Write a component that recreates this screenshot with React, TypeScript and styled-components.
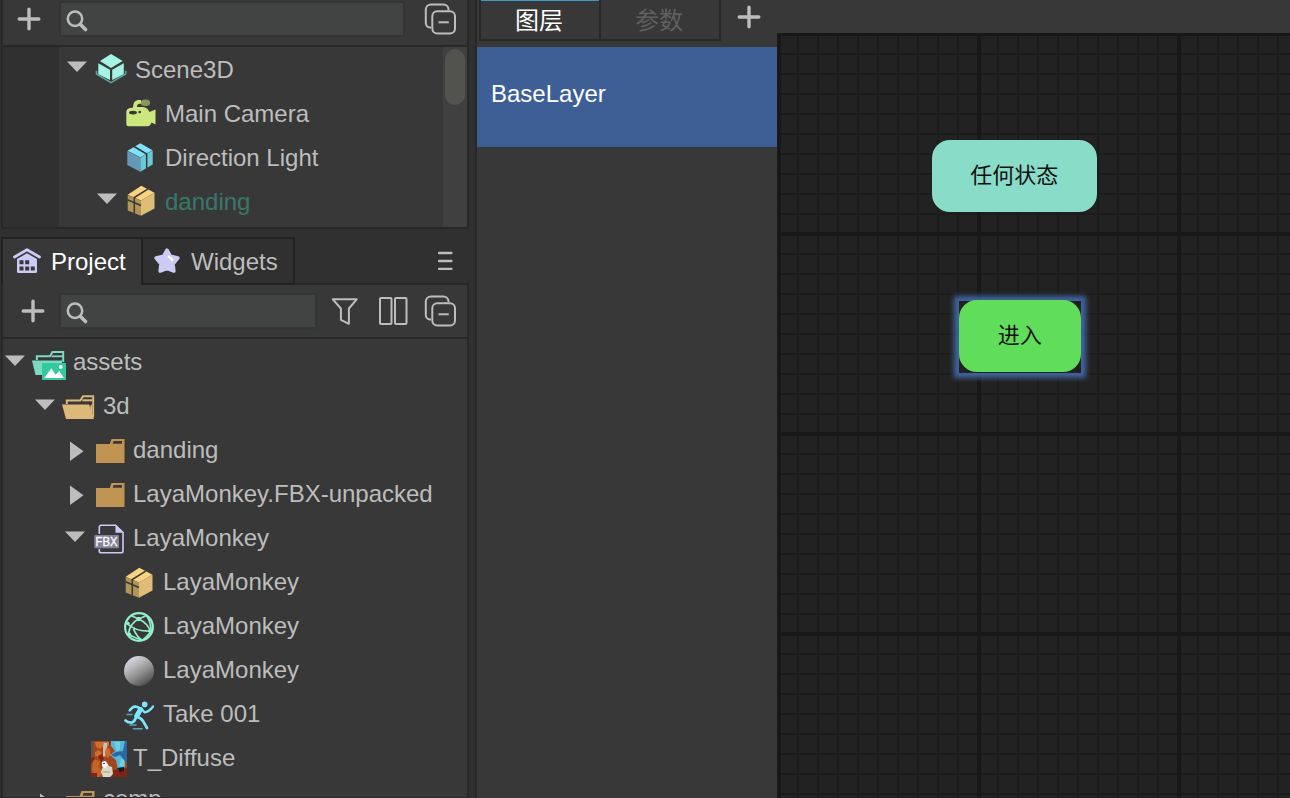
import React from "react";
import styled, { createGlobalStyle } from "styled-components";

const GlobalStyle = createGlobalStyle`
  * { box-sizing: border-box; }
  html, body { margin: 0; padding: 0; background: #303030; overflow: hidden; }
  body {
    font-family: "Liberation Sans", "Noto Sans CJK SC", sans-serif;
    font-size: 24px;
    color: #bdbdbd;
  }
  svg { display: block; flex: none; }
`;

const LINE = "#282828";
const PANEL = "#383838";
const ICON = "#bdbdbd";

const Shell = styled.div`
  display: grid;
  grid-template-columns: 475px 302px 513px;
  width: 1290px;
  height: 798px;
  overflow: hidden;
`;

const Sidebar = styled.aside`
  display: flex;
  flex-direction: column;
  gap: 8px;
  height: 798px;
  padding: 0 6px 0 1px;
  overflow: hidden;
`;

const HierarchyPanel = styled.section`
  display: flex;
  flex-direction: column;
  height: 229px;
  border: solid ${LINE};
  border-width: 0 2px 2px;
  background: ${PANEL};
`;

const ProjectPanel = styled.section`
  display: flex;
  flex-direction: column;
  height: 561px;
`;

const ProjectBody = styled.div`
  display: flex;
  flex-direction: column;
  flex: 1;
  min-height: 0;
  border: solid ${LINE};
  border-width: 0 2px 1px;
  background: ${PANEL};
`;

const Toolbar = styled.div<{ $height: number; $left: number; $top: number }>`
  display: flex;
  align-items: flex-start;
  height: ${(p) => p.$height}px;
  padding: ${(p) => p.$top}px 0 0 ${(p) => p.$left}px;
  border-bottom: 2px solid ${LINE};
  flex: none;
`;

const SearchBox = styled.div<{ $width: number; $left: number }>`
  width: ${(p) => p.$width}px;
  height: 36px;
  margin-left: ${(p) => p.$left}px;
  border: 2px solid #343535;
  background: #414443;
  flex: none;
`;

const ToolButton = styled.span<{ $left?: number; $top?: number }>`
  display: flex;
  margin-left: ${(p) => p.$left ?? 0}px;
  margin-top: ${(p) => p.$top ?? 0}px;
`;

const HierarchyBody = styled.div`
  display: grid;
  grid-template-columns: 56px 384px 24px;
  flex: 1;
  min-height: 0;
`;

const Gutter = styled.div`
  background: #303030;
`;

const ScrollTrack = styled.div`
  padding: 2px;
  background: #404040;
`;

const ScrollThumb = styled.div`
  width: 20px;
  height: 56px;
  border-radius: 10px;
  background: #52524f;
`;

const Tree = styled.div`
  flex: 1;
  min-height: 0;
  overflow: hidden;
`;

const TreeRow = styled.div<{ $indent: number }>`
  display: flex;
  height: 44px;
  padding-left: ${(p) => p.$indent}px;
`;

const GlyphSlot = styled.span<{ $lift: boolean }>`
  display: flex;
  height: 44px;
  margin-top: ${(p) => (p.$lift ? -2 : 0)}px;
`;

const RowLabel = styled.span<{ $color?: string; $raise?: number }>`
  margin-left: 6px;
  margin-top: ${(p) => -(p.$raise ?? 0)}px;
  line-height: 45px;
  white-space: nowrap;
  color: ${(p) => p.$color ?? "#bdbdbd"};
`;

const PanelTabs = styled.div`
  display: flex;
  height: 48px;
  flex: none;
`;

const PanelTab = styled.div<{ $active?: boolean; $width: number }>`
  display: flex;
  align-items: center;
  width: ${(p) => p.$width}px;
  height: 48px;
  border: solid #222222;
  border-width: 2px 2px ${(p) => (p.$active ? 0 : 2)}px ${(p) => (p.$active ? 2 : 0)}px;
  padding-bottom: ${(p) => (p.$active ? 2 : 0)}px;
  background: ${(p) => (p.$active ? PANEL : "#303030")};
  color: ${(p) => (p.$active ? "#ffffff" : "#bdbdbd")};
`;

const TabLabel = styled.span<{ $left: number }>`
  margin-left: ${(p) => p.$left}px;
  line-height: 28px;
  padding-top: 1px;
`;

const TabsRest = styled.div`
  display: flex;
  flex: 1;
  justify-content: flex-end;
  padding: 13px 15px 0 0;
  border-bottom: 2px solid ${LINE};
`;

const LayerPanel = styled.section`
  display: flex;
  flex-direction: column;
  height: 798px;
  border-left: 2px solid ${LINE};
  background: ${PANEL};
`;

const LayerTabs = styled.div`
  display: flex;
  height: 47px;
  padding-left: 2px;
  flex: none;
`;

const LayerTab = styled.div<{ $active?: boolean }>`
  width: ${(p) => (p.$active ? 122 : 120)}px;
  height: 41px;
  border: solid ${LINE};
  border-width: 0 2px 2px ${(p) => (p.$active ? 2 : 0)}px;
  box-shadow: ${(p) => (p.$active ? "inset 0 1px 0 #3f97c6" : "none")};
  padding-right: 2px;
  line-height: 41px;
  text-align: center;
  color: ${(p) => (p.$active ? "#ffffff" : "#606060")};
`;

const LayerItem = styled.div`
  height: 100px;
  padding-left: 14px;
  line-height: 94px;
  background: #3e5f96;
  color: #ffffff;
`;

const GraphColumn = styled.main`
  height: 798px;
  padding-top: 33px;
  background: ${PANEL};
`;

const Canvas = styled.div`
  position: relative;
  height: 765px;
  overflow: hidden;
  background-color: #222222;
  background-image:
    linear-gradient(90deg, #181818 4px, transparent 4px),
    linear-gradient(#181818 4px, transparent 4px),
    linear-gradient(90deg, #1c1c1c 2px, transparent 2px),
    linear-gradient(#1c1c1c 2px, transparent 2px);
  background-size: 200px 200px, 200px 200px, 20px 20px, 20px 20px;
  background-position: 0 0, 0 -1px, 0 0, 0 0;
`;

const StateNode = styled.div<{ $x: number; $y: number; $w: number; $color: string }>`
  position: absolute;
  left: ${(p) => p.$x}px;
  top: ${(p) => p.$y}px;
  width: ${(p) => p.$w}px;
  height: 72px;
  border-radius: 18px;
  background: ${(p) => p.$color};
  color: #111111;
  font-size: 22px;
  line-height: 71px;
  text-align: center;
`;

const SelectionFrame = styled.div`
  position: absolute;
  left: 182px;
  top: 268px;
  width: 122px;
  height: 72px;
  box-shadow: 0 0 5px 5px #41659f;
`;

const Plus = () => (
  <svg width="24" height="24" viewBox="0 0 24 24" stroke={ICON} strokeWidth="3.4" strokeLinecap="round">
    <path d="M12 2.2V21.8M2.2 12H21.8" />
  </svg>
);

const SearchGlyph = () => (
  <svg width="30" height="32" viewBox="0 0 30 32" fill="none" stroke={ICON} strokeLinecap="round">
    <circle cx="14" cy="15.7" r="7.2" strokeWidth="2.5" />
    <path d="M19.5 21.5L24.500 26.500" strokeWidth="3.6" />
  </svg>
);

const CollapseGlyph = () => (
  <svg width="34" height="34" viewBox="0 0 34 34" fill="none" stroke={ICON} strokeWidth="2">
    <path d="M8 25.6H7a4.5 4.5 0 0 1-4.2-4.5V7.5A5.2 5.2 0 0 1 8 2.5H20.500a5 5 0 0 1 5 4.8V8" />
    <rect x="9.300" y="9.300" width="22.700" height="22.200" rx="5" />
    <path d="M15.500 20.300H25.800" />
  </svg>
);

const FilterGlyph = () => (
  <svg width="28" height="30" viewBox="0 0 28 30" fill="none" stroke={ICON} strokeWidth="2" strokeLinejoin="round">
    <path d="M1.800 3.300H25.700L17.900 12.500V27.800L9.900 23.800V12.500Z" />
  </svg>
);

const ColumnsGlyph = () => (
  <svg width="30" height="30" viewBox="0 0 30 30" fill="none" stroke={ICON} strokeWidth="2">
    <rect x="2" y="2" width="11.500" height="26" rx="1" />
    <rect x="17" y="2" width="11.500" height="26" rx="1" />
  </svg>
);

const MenuGlyph = () => (
  <svg width="16" height="20" viewBox="0 0 16 20" stroke={ICON} strokeWidth="2.300" strokeLinecap="round">
    <path d="M1 3H13.500M1 11H13.500M1 18.800H13.500" />
  </svg>
);

const HouseGlyph = () => (
  <svg width="30" height="28" viewBox="0 0 30 28">
    <path d="M2.500 10L15 2.700L27.500 10" fill="none" stroke="#cccbf6" strokeWidth="2.800" strokeLinecap="round" strokeLinejoin="round" />
    <path d="M5 12L15 6.300L25 12V24.500Q25 26 23.500 26H6.500Q5 26 5 24.500Z" fill="#cccbf6" />
    <path d="M7.500 13.300h4v4h-4zM13.200 13.300h4v4h-4zM7.500 19.600h4v4h-4zM13.200 19.600h4v4h-4zM18.800 19.600h4v4h-4z" fill={PANEL} />
  </svg>
);

const StarGlyph = () => (
  <svg width="28" height="28" viewBox="0 0 28 28">
    <path
      d="M14 3.200L17.400 9.300L24.800 11L20 16.800L20.800 24L14 21.300L7.200 24L8 16.800L3.200 11L10.600 9.300Z"
      fill="#cccbf6"
      stroke="#cccbf6"
      strokeWidth="3.600"
      strokeLinejoin="round"
    />
    <path d="M15.800 9.700Q18.200 10.800 19.200 13.300" fill="none" stroke="#ffffff" strokeWidth="2.300" strokeLinecap="round" />
  </svg>
);

const Arrow = ({ state }: { state?: "open" | "closed" }) => (
  <svg width="20" height="44" viewBox="0 0 20 44" fill={ICON}>
    {state === "open" && <path d="M0 16.500H20L10 27Z" />}
    {state === "closed" && <path d="M5 14.500V34L18.500 24.200Z" />}
  </svg>
);

const glyphBox = { width: 36, height: 44, viewBox: "0 0 36 44" };

const SceneGlyph = () => (
  <svg {...glyphBox}>
    <path d="M18 9L29.700 16L18 23L7 16Z" fill="#a5f3e2" />
    <path d="M5.300 18.300L17 24.800V35L5.300 29.300Z" fill="#a5f3e2" />
    <path d="M19.200 24.800L30.800 18.300V29.300L19.200 35Z" fill="#a5f3e2" />
    <path d="M3.500 25.700V29L18 37.600L32.700 29V25.700" fill="none" stroke="#5f9f9f" strokeWidth="1.600" />
  </svg>
);

const CameraGlyph = () => (
  <svg {...glyphBox}>
    <ellipse cx="22.500" cy="13.800" rx="4.600" ry="3.300" fill="#8c985a" />
    <path
      d="M3.300 35V22.500Q3.500 20 6 19.300L10 18.500Q10 11.500 15 11H18V14.800H16Q14 15 13.800 18H20Q24.500 18.500 26.500 23L32.500 20.500V35.500L28.500 33.500Q27.500 37.200 24.500 37.200H5.500Q3.300 37.200 3.300 35Z"
      fill="#cbe77d"
    />
    <ellipse cx="10" cy="23.600" rx="4" ry="1.900" fill={PANEL} />
    <circle cx="16.700" cy="23" r="1.300" fill={PANEL} />
  </svg>
);

const CubeGlyph = () => (
  <svg {...glyphBox}>
    <path d="M17.300 10.300L29.500 17.300L17.300 24.300L4.500 17.700Z" fill="#7ee4fc" />
    <path d="M4.300 18L17.300 24.600V38.700L4.300 32Z" fill="#6698b7" />
    <path d="M17.300 24.600L29.700 17.600V31.500L17.300 38.700Z" fill="#6bcada" />
    <path d="M11 13.500L23.700 21V36" fill="none" stroke={PANEL} strokeWidth="1.500" />
  </svg>
);

const PackageGlyph = () => (
  <svg {...glyphBox}>
    <path d="M18.300 8.700L31.500 15.800L18 23.500L4.700 17.800Z" fill="#f8d482" />
    <path d="M4.700 18L18 23.500V38.700L4.700 33.500Z" fill="#b09657" />
    <path d="M18 23.500L31.500 15.800V31.500L18 38.700Z" fill="#dfbc78" />
    <path d="M24.700 12.200L11.300 20.500V36.200" fill="none" stroke={PANEL} strokeWidth="1.500" />
    <path d="M4.500 22.700L18 28.500" fill="none" stroke={PANEL} strokeWidth="1.500" />
  </svg>
);

const AssetsGlyph = () => (
  <svg {...glyphBox}>
    <path d="M5.800 21V17.300H19L21.500 13H32.200V23" fill="none" stroke="#7bdac2" strokeWidth="2" />
    <path d="M20.500 17.300H32" stroke="#7bdac2" strokeWidth="1.800" />
    <path d="M1 21.600H31V25H11V36H4.500Z" fill="#7bdac2" />
    <path d="M11 24H35V41H11Z" fill="#34c99c" />
    <circle cx="29.700" cy="28" r="1.900" fill="#ffffff" />
    <path d="M13.300 39L20.300 29.300L24.500 35.800L28.300 32L32.800 39Z" fill="#ffffff" />
  </svg>
);

const OpenFolderGlyph = () => (
  <svg {...glyphBox}>
    <path d="M5.800 21V17.500H19.300L22 13.200H32.200V34" fill="none" stroke="#deb878" strokeWidth="1.900" />
    <path d="M21.300 17.300H32" stroke="#deb878" strokeWidth="2" />
    <path d="M1 21.400H28.200L33 36H5Z" fill="#deb878" />
    <path d="M29.300 23V30L31 34V21Z" fill="#deb878" />
  </svg>
);

const FolderGlyph = () => (
  <svg {...glyphBox}>
    <path
      fillRule="evenodd"
      d="M5 17H18.700L20.500 12H33.500V36H5ZM22.600 14L21.700 16.700H31V14Z"
      fill="#c09553"
    />
  </svg>
);

const BadgeText = styled.text`
  font: 12px "Liberation Sans", sans-serif;
  fill: #ffffff;
  stroke: #ffffff;
  stroke-width: 0.3px;
`;

const FbxGlyph = () => (
  <svg {...glyphBox}>
    <path d="M8.300 19V12Q8.300 10.200 10.300 10.200H24.500L32 17.500V36Q32 37.800 30 37.800H10.300Q8.300 37.800 8.300 36V34" fill="none" stroke="#cccbf6" strokeWidth="1.600" />
    <path d="M24.500 9.500V17.800H33Z" fill="#cccbf6" />
    <rect x="3.300" y="20" width="24.700" height="13.300" rx="1" fill="#85819a" />
    <BadgeText x="4.600" y="31" textLength="22" lengthAdjust="spacingAndGlyphs">FBX</BadgeText>
  </svg>
);

const MeshGlyph = () => (
  <svg {...glyphBox} fill="none" stroke="#91efcb" strokeWidth="1.700">
    <circle cx="18" cy="24" r="13.900" strokeWidth="2.200" />
    <path d="M10 12.500L17.700 16L25.500 12.500" />
    <path d="M17.700 16Q8.500 20.500 7.500 31" />
    <path d="M17.700 16Q26.500 20 29.500 28.500" />
    <path d="M6 20.500Q14 28.500 30 28.200" />
    <path d="M7.500 31.500Q14 35 21.500 37.200Q26 33.500 30 28.500" />
    <path d="M12.500 25.500Q14.500 32 20.500 37" />
    <path d="M25.500 12.500Q30 19 30 28" />
    <g fill="#91efcb" stroke="none">
      <circle cx="17.700" cy="16" r="2.200" />
      <circle cx="29.500" cy="28.200" r="2.100" />
      <circle cx="8.300" cy="31.500" r="2" />
      <circle cx="6.800" cy="20.300" r="1.800" />
    </g>
  </svg>
);

const MaterialGlyph = () => (
  <svg {...glyphBox}>
    <defs>
      <linearGradient id="ball" x1="0.2" y1="0.1" x2="0.75" y2="0.95">
        <stop offset="0" stopColor="#d6d4e2" />
        <stop offset="0.250" stopColor="#bbbbbd" />
        <stop offset="0.600" stopColor="#8c8c8c" />
        <stop offset="1" stopColor="#4e4e4e" />
      </linearGradient>
    </defs>
    <circle cx="18" cy="24" r="15" fill="url(#ball)" />
  </svg>
);

const RunnerGlyph = () => (
  <svg {...glyphBox} fill="none" stroke="#7de5fd" strokeLinecap="round" strokeLinejoin="round">
    <circle cx="23.700" cy="13.400" r="2.800" fill="#7de5fd" stroke="none" />
    <path d="M8.700 19.300L11.500 16.500Q14 14.500 18.500 17" strokeWidth="2.600" />
    <path d="M19.500 18.500L15.700 25" strokeWidth="5" />
    <path d="M20.500 17.800L23.500 21.300Q28 21 32 15.500" strokeWidth="2.300" />
    <path d="M15 26.500Q13 32 9.500 31.500Q6.500 31.300 4.500 29.500" strokeWidth="2.700" />
    <path d="M16 25.500Q20.500 27.500 22 30L26 37" strokeWidth="2.700" />
    <path d="M6 23.500H11M9 34H15M12.500 37.700H21" stroke="#58a6b9" strokeWidth="1.500" />
  </svg>
);

const TextureGlyph = () => (
  <svg {...glyphBox}>
    <rect y="6" width="36" height="36" fill="#a5451c" />
    <path d="M0 6H3V13L2 22H0Z" fill="#665148" />
    <path d="M4 7H12V11L9 14L5 12ZM4 17L8 15L11 18L8 22L4 21ZM14 14L18 13L20 20L16 23Z" fill="#cf6d2c" />
    <path d="M2 24L9 26L8 32L12 37L8 42H3L1 35Z" fill="#c46327" />
    <path d="M0 23L4 22L3 25L0 29ZM7 21L11 19L13 24L10 27ZM17 7L21 6L18 11ZM0 38H6V42H0ZM22 35L36 33V42H20Z" fill="#7f2513" />
    <path d="M11 7H18V10L15 14V22H12V13Z" fill="#b5805f" />
    <path d="M13 8H16V12L14 16V21H12V12Z" fill="#d3bca6" />
    <path d="M20 6H36V17L34 22V32L27 35L25 25L19 20L24 16L20 11Z" fill="#53b8d9" />
    <path d="M23 7H29V14L26 17ZM30 24L33 23V31L28 32Z" fill="#6fd0e4" />
    <path d="M34 6H36V28L33 25L29 20L24 22L20 20L25 17L32 16Z" fill="#2f65a3" />
    <path d="M26 33L33 32V36L29 37Z" fill="#161923" />
    <path d="M11 27L15 26L18 31L21 32L22 39L19 42H12L10 37L12 31Z" fill="#d8d7ca" />
    <path d="M11 27L14 26L17 30L14 33L11 31Z" fill="#ffffff" />
    <circle cx="13" cy="28.500" r="0.800" fill="#222222" />
    <path d="M12 36H19V38H12Z" fill="#c9b993" />
  </svg>
);

type Item = {
  label: string;
  level: number;
  Glyph: React.FC;
  state?: "open" | "closed";
  color?: string;
  raise?: number;
};

const hierarchy: Item[] = [
  { label: "Scene3D", level: 0, Glyph: SceneGlyph, state: "open" },
  { label: "Main Camera", level: 1, Glyph: CameraGlyph },
  { label: "Direction Light", level: 1, Glyph: CubeGlyph },
  { label: "danding", level: 1, Glyph: PackageGlyph, state: "open", color: "#38786a" },
];

const assets: Item[] = [
  { label: "assets", level: 0, Glyph: AssetsGlyph, state: "open" },
  { label: "3d", level: 1, Glyph: OpenFolderGlyph, state: "open" },
  { label: "danding", level: 2, Glyph: FolderGlyph, state: "closed" },
  { label: "LayaMonkey.FBX-unpacked", level: 2, Glyph: FolderGlyph, state: "closed" },
  { label: "LayaMonkey", level: 2, Glyph: FbxGlyph, state: "open" },
  { label: "LayaMonkey", level: 3, Glyph: PackageGlyph },
  { label: "LayaMonkey", level: 3, Glyph: MeshGlyph },
  { label: "LayaMonkey", level: 3, Glyph: MaterialGlyph },
  { label: "Take 001", level: 3, Glyph: RunnerGlyph },
  { label: "T_Diffuse", level: 2, Glyph: TextureGlyph },
  { label: "comp", level: 1, Glyph: FolderGlyph, state: "closed", raise: 3 },
];

const ArrowSlot = styled(GlyphSlot)`
  width: 26px;
`;

const TreeView = ({ items, inset, lift = false }: { items: Item[]; inset: number; lift?: boolean }) => (
  <Tree>
    {items.map(({ label, level, Glyph, state, color, raise }, i) => (
      <TreeRow key={i} $indent={inset + level * 30}>
        <ArrowSlot $lift={lift}>
          <Arrow state={state} />
        </ArrowSlot>
        <GlyphSlot $lift={lift}>
          <Glyph />
        </GlyphSlot>
        <RowLabel $color={color} $raise={raise}>{label}</RowLabel>
      </TreeRow>
    ))}
  </Tree>
);

export default function App() {
  return (
    <>
      <GlobalStyle />
      <Shell>
        <Sidebar>
          <HierarchyPanel>
            <Toolbar $height={47} $left={14} $top={1}>
              <ToolButton $top={6}>
                <Plus />
              </ToolButton>
              <SearchBox $width={346} $left={18}>
                <SearchGlyph />
              </SearchBox>
              <ToolButton $left={18} $top={1}>
                <CollapseGlyph />
              </ToolButton>
            </Toolbar>
            <HierarchyBody>
              <Gutter />
              <TreeView items={hierarchy} inset={8} lift />
              <ScrollTrack>
                <ScrollThumb />
              </ScrollTrack>
            </HierarchyBody>
          </HierarchyPanel>

          <ProjectPanel>
            <PanelTabs>
              <PanelTab $active $width={142}>
                <ToolButton $left={9}>
                  <HouseGlyph />
                </ToolButton>
                <TabLabel $left={9}>Project</TabLabel>
              </PanelTab>
              <PanelTab $width={152}>
                <ToolButton $left={10}>
                  <StarGlyph />
                </ToolButton>
                <TabLabel $left={10}>Widgets</TabLabel>
              </PanelTab>
              <TabsRest>
                <MenuGlyph />
              </TabsRest>
            </PanelTabs>
            <ProjectBody>
              <Toolbar $height={54} $left={18} $top={8}>
                <ToolButton $top={6}>
                  <Plus />
                </ToolButton>
                <SearchBox $width={258} $left={14}>
                  <SearchGlyph />
                </SearchBox>
                <ToolButton $left={14} $top={3}>
                  <FilterGlyph />
                </ToolButton>
                <ToolButton $left={19} $top={3}>
                  <ColumnsGlyph />
                </ToolButton>
                <ToolButton $left={15} $top={1}>
                  <CollapseGlyph />
                </ToolButton>
              </Toolbar>
              <TreeView items={assets} inset={2} />
            </ProjectBody>
          </ProjectPanel>
        </Sidebar>

        <LayerPanel>
          <LayerTabs>
            <LayerTab $active>图层</LayerTab>
            <LayerTab>参数</LayerTab>
            <ToolButton $left={16} $top={5}>
              <Plus />
            </ToolButton>
          </LayerTabs>
          <LayerItem>BaseLayer</LayerItem>
        </LayerPanel>

        <GraphColumn>
          <Canvas>
            <StateNode $x={154.5} $y={107} $w={165.5} $color="#88dcc8">任何状态</StateNode>
            <SelectionFrame />
            <StateNode $x={181.5} $y={267} $w={122.5} $color="#60dd5a">进入</StateNode>
          </Canvas>
        </GraphColumn>
      </Shell>
    </>
  );
}
